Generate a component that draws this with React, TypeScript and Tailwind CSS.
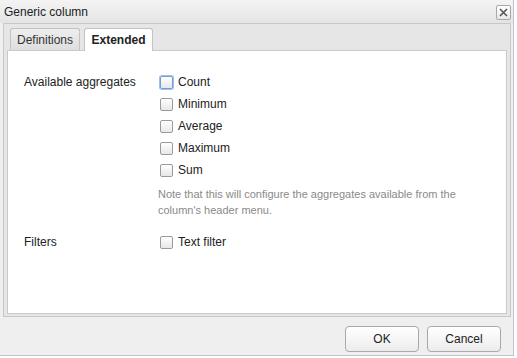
import React from "react";

function Box({ focused }: { focused?: boolean }) {
  return (
    <span
      className={
        "inline-block w-[13px] h-[13px] rounded-[2px] border bg-gradient-to-b from-white to-[#e8e8e8] " +
        (focused ? "border-[#6f9fd8] shadow-[0_0_0_1px_#9ec0ea]" : "border-[#9a9a9a]")
      }
    />
  );
}

function Check({ label, focused }: { label: string; focused?: boolean }) {
  return (
    <div className="flex items-center h-[22px] gap-[5px]">
      <Box focused={focused} />
      <span className="text-[#222]">{label}</span>
    </div>
  );
}

export default function App() {
  return (
    <div
      className="w-[517px] h-[358px] bg-white flex"
      style={{ fontFamily: '"Liberation Sans", Arial, sans-serif' }}
    >
      <div className="w-[514px] h-[356px] bg-[#efefef] border-r border-b border-[#c4c4c4] flex flex-col text-[12px]">
        <div className="h-[23px] flex items-center justify-between bg-gradient-to-b from-[#f4f4f4] to-[#e4e4e4] pl-[4px] pr-[2px]">
          <span className="text-[#222] text-[12px]">Generic column</span>
          <span className="w-[15px] h-[15px] mt-[1px] border border-[#a8a8a8] rounded-[2px] bg-gradient-to-b from-white to-[#e8e8e8] flex items-center justify-center">
            <svg width="9" height="9" viewBox="0 0 9 9">
              <path d="M1 1 L8 8 M8 1 L1 8" stroke="#555" strokeWidth="1.6" />
            </svg>
          </span>
        </div>
        <div className="ml-[3px] mr-[2px] h-[294px] border border-[#c8c8c8] bg-[#e6e6e6] flex flex-col">
          <div className="h-[26px] flex items-end pl-[6px] gap-[4px]">
            <div className="h-[22px] w-[70px] border border-b-0 border-[#c2c2c2] rounded-t-[3px] bg-gradient-to-b from-[#eeeeee] to-[#dedede] flex items-center justify-center text-[#333]">
              Definitions
            </div>
            <div className="h-[23px] w-[69px] border border-b-0 border-[#c2c2c2] rounded-t-[3px] bg-white flex items-center justify-center font-bold text-[#222] -mb-px relative">
              Extended
            </div>
          </div>
          <div className="ml-[3px] mr-[3px] mb-[2px] flex-1 bg-white border border-[#cacaca] pt-[20px] pl-[16px]">
            <div className="flex">
              <div className="w-[136px] h-[22px] flex items-center text-[#222]">Available aggregates</div>
              <div className="flex flex-col">
                <Check label="Count" focused />
                <Check label="Minimum" />
                <Check label="Average" />
                <Check label="Maximum" />
                <Check label="Sum" />
                <div className="text-[11px] leading-[16px] text-[#8a8a8a] mt-[5px] -ml-[2px] w-[320px]">
                  Note that this will configure the aggregates available from the column's header menu.
                </div>
              </div>
            </div>
            <div className="flex mt-[13px]">
              <div className="w-[136px] h-[22px] flex items-center text-[#222]">Filters</div>
              <Check label="Text filter" />
            </div>
          </div>
        </div>
        <div className="flex justify-end gap-[8px] pr-[12px] pt-[9px]">
          <button className="w-[74px] h-[26px] border border-[#a9a9a9] rounded-[4px] bg-gradient-to-b from-white to-[#ececec] text-[#222] text-[12px]">
            OK
          </button>
          <button className="w-[74px] h-[26px] border border-[#a9a9a9] rounded-[4px] bg-gradient-to-b from-white to-[#ececec] text-[#222] text-[12px]">
            Cancel
          </button>
        </div>
      </div>
    </div>
  );
}
